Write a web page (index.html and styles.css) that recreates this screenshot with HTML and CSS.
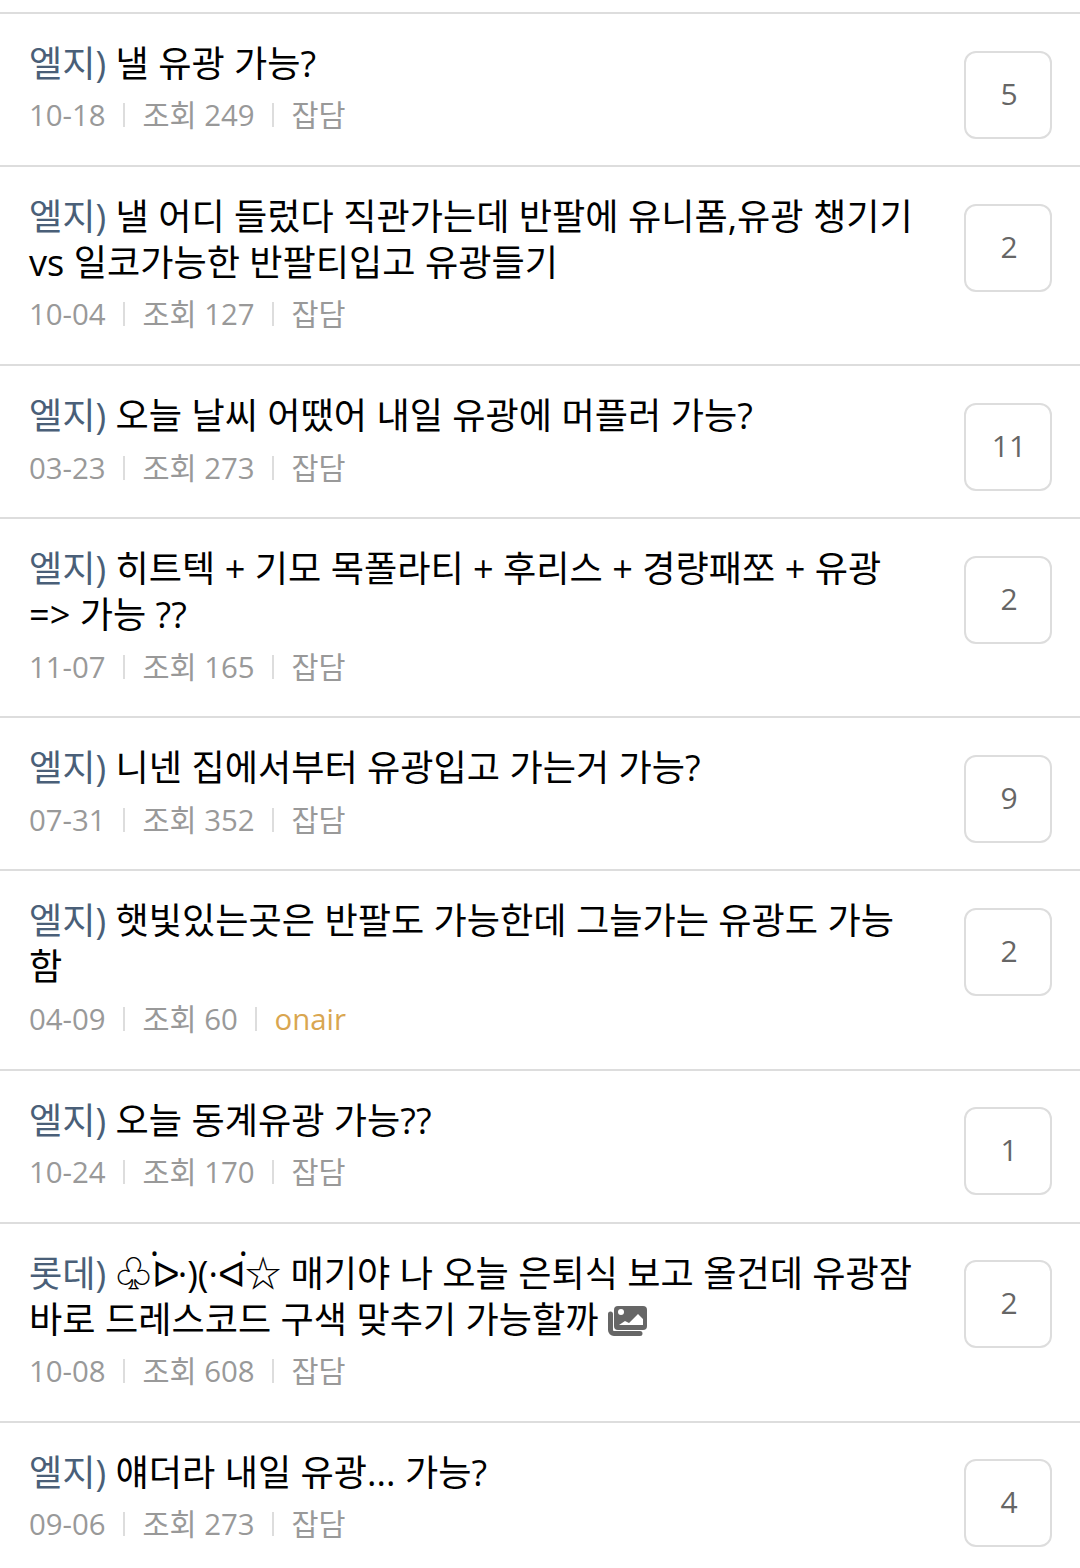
FILE: index.html
```html
<!DOCTYPE html>
<html lang="ko">
<head>
<meta charset="utf-8">
<title>유광 가능</title>
<link rel="stylesheet" href="styles.css">
</head>
<body>
<ul class="list">
<li class="row"><div class="main"><div class="title"><span class="tag">엘지)</span> 낼 유광 가능?</div><div class="meta"><span>10-18</span><i></i><span>조회 249</span><i></i><span>잡담</span></div></div><div class="count">5</div></li>
<li class="row two"><div class="main"><div class="title"><span class="tag">엘지)</span> 낼 어디 들렀다 직관가는데 반팔에 유니폼,유광 챙기기<br>vs 일코가능한 반팔티입고 유광들기</div><div class="meta"><span>10-04</span><i></i><span>조회 127</span><i></i><span>잡담</span></div></div><div class="count">2</div></li>
<li class="row"><div class="main"><div class="title"><span class="tag">엘지)</span> 오늘 날씨 어땠어 내일 유광에 머플러 가능?</div><div class="meta"><span>03-23</span><i></i><span>조회 273</span><i></i><span>잡담</span></div></div><div class="count">11</div></li>
<li class="row two"><div class="main"><div class="title"><span class="tag">엘지)</span> 히트텍 + 기모 목폴라티 + 후리스 + 경량패쪼 + 유광<br>=&gt; 가능 ??</div><div class="meta"><span>11-07</span><i></i><span>조회 165</span><i></i><span>잡담</span></div></div><div class="count">2</div></li>
<li class="row"><div class="main"><div class="title"><span class="tag">엘지)</span> 니넨 집에서부터 유광입고 가는거 가능?</div><div class="meta"><span>07-31</span><i></i><span>조회 352</span><i></i><span>잡담</span></div></div><div class="count">9</div></li>
<li class="row two"><div class="main"><div class="title"><span class="tag">엘지)</span> 햇빛있는곳은 반팔도 가능한데 그늘가는 유광도 가능<br>함</div><div class="meta"><span>04-09</span><i></i><span>조회 60</span><i></i><span class="onair">onair</span></div></div><div class="count">2</div></li>
<li class="row"><div class="main"><div class="title"><span class="tag">엘지)</span> 오늘 동계유광 가능??</div><div class="meta"><span>10-24</span><i></i><span>조회 170</span><i></i><span>잡담</span></div></div><div class="count">1</div></li>
<li class="row two"><div class="main"><div class="title"><span class="tag">롯데)</span> ♧<span class="tri first">ᐅ<span class="dot">·</span></span>·)(·<span class="tri last">ᐊ<span class="dot right">·</span></span>☆ 매기야 나 오늘 은퇴식 보고 올건데 유광잠<br>바로 드레스코드 구색 맞추기 가능할까 <svg class="pic" viewBox="0 0 39 30" aria-hidden="true"><rect x="6" y="0" width="33" height="24" rx="4" fill="#666"/><circle cx="13" cy="6" r="3" fill="#fff"/><path d="M11 19l6-4 4 2 9-9 5 5v6Z" fill="#fff"/><path d="M2.500 8v16a3.500 3.500 0 0 0 3.500 3.500h26" fill="none" stroke="#666" stroke-width="5" stroke-linecap="round"/></svg></div><div class="meta"><span>10-08</span><i></i><span>조회 608</span><i></i><span>잡담</span></div></div><div class="count">2</div></li>
<li class="row"><div class="main"><div class="title"><span class="tag">엘지)</span> 얘더라 내일 유광... 가능?</div><div class="meta"><span>09-06</span><i></i><span>조회 273</span><i></i><span>잡담</span></div></div><div class="count">4</div></li>
</ul>
</body>
</html>
```
FILE: styles.css
```css
* { box-sizing: border-box; }
html, body { margin: 0; padding: 0; background: #fff; }
body {
  padding-top: 12.22px;
  font-family: "Open Sans", "Noto Sans CJK KR", sans-serif;
}
.list { list-style: none; margin: 0; padding: 0; }
.row {
  display: flex;
  align-items: flex-start;
  justify-content: space-between;
  border-top: 2px solid #ddd;
  padding: 26px 28px 0 29px;
  height: 153.05px;
}
.row.two { height: 199.05px; }
.main { flex: 1; min-width: 0; }
.title {
  font-size: 36.15px;
  line-height: 46px;
  color: #000;
  white-space: nowrap;
}
.tag { color: #4a5f78; }
.tri { position: relative; }
.tri.first { margin-right: -2px; }
.tri.last { margin-right: -1px; }
.dot {
  position: absolute;
  left: -2px;
  top: -2px;
  line-height: 12px;
}
.dot.right { left: auto; right: -2px; }
.meta {
  display: flex;
  align-items: center;
  margin-top: 6.2px;
  font-size: 29.4px;
  line-height: 46px;
  color: #999;
}
.meta i {
  width: 2px;
  height: 24px;
  margin: 0 17.4px;
  background: #ddd;
}
.onair { color: #d9a650; }
.count {
  flex: none;
  display: flex;
  align-items: center;
  justify-content: center;
  width: 88px;
  height: 88px;
  margin-top: 10.8px;
  padding: 0 0 4px 2px;
  border: 2px solid #ddd;
  border-radius: 12px;
  font-size: 30px;
  color: #666;
}
.pic { width: 39px; height: 30px; vertical-align: -3px; }
```
